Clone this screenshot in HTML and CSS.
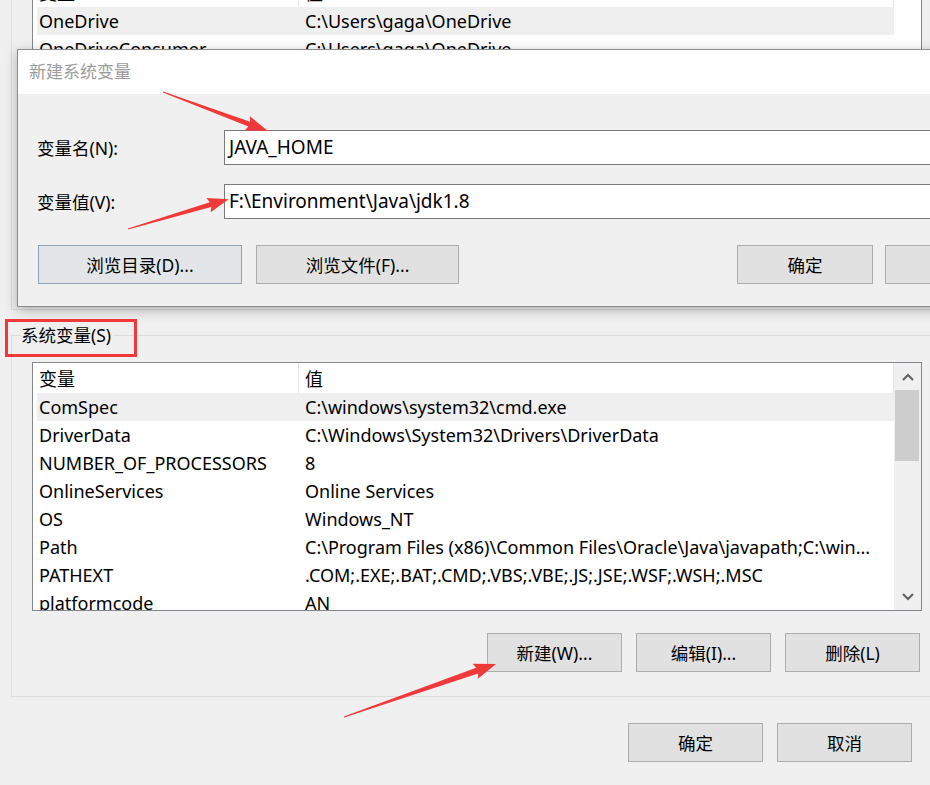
FILE: index.html
```html
<!DOCTYPE html>
<html lang="zh-CN">
<head>
<meta charset="utf-8">
<title>环境变量</title>
<link rel="stylesheet" href="styles.css">
</head>
<body>
<div class="window">
  <div class="group-user">
    <div class="listbox listbox-user">
      <div class="list-main">
        <div class="list-header">
          <div class="hcell hcell-name">变量</div>
          <div class="hcell">值</div>
        </div>
        <div class="row row-sel"><div class="cell-name">OneDrive</div><div class="cell-val">C:\Users\gaga\OneDrive</div></div>
        <div class="row"><div class="cell-name">OneDriveConsumer</div><div class="cell-val">C:\Users\gaga\OneDrive</div></div>
        <div class="row"><div class="cell-name">Path</div><div class="cell-val">C:\Users\gaga\AppData\Local\Microsoft\WindowsApps</div></div>
        <div class="row"><div class="cell-name">TEMP</div><div class="cell-val">C:\Users\gaga\AppData\Local\Temp</div></div>
      </div>
      <div class="scrollbar scrollbar-white"></div>
    </div>
  </div>

  <fieldset class="group-sys">
    <legend>系统变量(S)</legend>
    <div class="listbox listbox-sys">
      <div class="list-main">
        <div class="list-header">
          <div class="hcell hcell-name">变量</div>
          <div class="hcell">值</div>
        </div>
        <div class="row row-sel"><div class="cell-name">ComSpec</div><div class="cell-val">C:\windows\system32\cmd.exe</div></div>
        <div class="row"><div class="cell-name">DriverData</div><div class="cell-val">C:\Windows\System32\Drivers\DriverData</div></div>
        <div class="row"><div class="cell-name">NUMBER_OF_PROCESSORS</div><div class="cell-val">8</div></div>
        <div class="row"><div class="cell-name">OnlineServices</div><div class="cell-val">Online Services</div></div>
        <div class="row"><div class="cell-name">OS</div><div class="cell-val">Windows_NT</div></div>
        <div class="row"><div class="cell-name">Path</div><div class="cell-val">C:\Program Files (x86)\Common Files\Oracle\Java\javapath;C:\win...</div></div>
        <div class="row"><div class="cell-name">PATHEXT</div><div class="cell-val">.COM;.EXE;.BAT;.CMD;.VBS;.VBE;.JS;.JSE;.WSF;.WSH;.MSC</div></div>
        <div class="row"><div class="cell-name">platformcode</div><div class="cell-val">AN</div></div>
      </div>
      <div class="scrollbar">
        <div class="sb-btn">
          <svg width="12" height="8" viewBox="0 0 12 8"><polyline points="1,7 6,2 11,7" fill="none" stroke="#606060" stroke-width="2"/></svg>
        </div>
        <div class="sb-thumb"></div>
        <div class="sb-track"></div>
        <div class="sb-btn">
          <svg width="12" height="8" viewBox="0 0 12 8"><polyline points="1,1 6,6 11,1" fill="none" stroke="#606060" stroke-width="2"/></svg>
        </div>
      </div>
    </div>
    <div class="list-actions">
      <div class="btn btn-sm">新建(W)...</div>
      <div class="btn btn-sm">编辑(I)...</div>
      <div class="btn btn-sm">删除(L)</div>
    </div>
  </fieldset>

  <div class="footer">
    <div class="btn btn-sm">确定</div>
    <div class="btn btn-sm">取消</div>
  </div>
</div>

<div class="dialog">
  <div class="dlg-title">新建系统变量</div>
  <div class="dlg-body">
    <div class="field">
      <label class="field-label">变量名(N):</label>
      <div class="input">JAVA_HOME</div>
    </div>
    <div class="field">
      <label class="field-label">变量值(V):</label>
      <div class="input">F:\Environment\Java\jdk1.8</div>
    </div>
    <div class="dlg-buttons">
      <div class="btn btn-focus btn-wide1">浏览目录(D)...</div>
      <div class="btn btn-wide2">浏览文件(F)...</div>
      <div class="btn btn-ok">确定</div>
      <div class="btn btn-cancel">取消</div>
    </div>
  </div>
</div>

<svg class="marks" width="930" height="785" viewBox="0 0 930 785">
  <rect x="6.5" y="320.5" width="129" height="35" fill="none" stroke="#f03a3a" stroke-width="3"/>
  <g transform="translate(163 92) rotate(20.4)" fill="#f03a3a">
    <polygon points="0,-0.5 92,-2.5 90,-7.5 112,0 90,7.5 92,2.5 0,0.5"/>
  </g>
  <g transform="translate(128 229) rotate(-16.5)" fill="#f03a3a">
    <polygon points="0,-0.5 86,-2.5 84,-7.5 105,0 84,7.5 86,2.5 0,0.5"/>
  </g>
  <g transform="translate(344 717) rotate(-19.2)" fill="#f03a3a">
    <polygon points="0,-0.6 141,-3 139,-8 161,0 139,8 141,3 0,0.6"/>
  </g>
</svg>
</body>
</html>
```
FILE: styles.css
```css
* { box-sizing: border-box; }
html, body { margin: 0; padding: 0; }
body {
  width: 930px;
  height: 785px;
  overflow: hidden;
  position: relative;
  background: #f0f0f0;
  font-family: "Noto Sans", "Noto Sans CJK SC", sans-serif;
  font-size: 18px;
  color: #000;
}

.window { padding-left: 11px; }

/* upper (user variables) group, mostly hidden under the dialog */
.group-user {
  margin-top: -60px;
  width: 940px;
  height: 370px;
  border: 1px solid #dcdcdc;
  padding: 35px 0 0 20px;
}

.listbox {
  width: 890px;
  border: 1px solid #828790;
  background: #fff;
  display: flex;
  overflow: hidden;
}
.listbox-user { height: 300px; }
.listbox-sys { height: 249px; }

.list-main { flex: 1; overflow: hidden; }
.list-header {
  height: 30px;
  display: grid;
  grid-template-columns: 266px 1fr;
  border-right: 1px solid #e5e5e5;
}
.hcell {
  display: flex;
  align-items: center;
  padding-left: 6px;
  white-space: nowrap;
}
.hcell-name { border-right: 1px solid #e5e5e5; }

.row {
  margin-left: 4px;
  height: 28px;
  display: grid;
  grid-template-columns: 266px 1fr;
  align-items: center;
  white-space: nowrap;
}
.row-sel { background: #efefef; }
.cell-name, .cell-val { padding-left: 2px; overflow: hidden; }

.scrollbar {
  width: 27px;
  flex: none;
  background: #f0f0f0;
  display: flex;
  flex-direction: column;
}
.scrollbar-white { background: #fff; }
.sb-btn {
  height: 27px;
  flex: none;
  display: flex;
  align-items: center;
  justify-content: center;
}
.sb-btn svg { display: block; }
.sb-thumb {
  height: 71px;
  flex: none;
  margin: 0 2px 0 1px;
  background: #cdcdcd;
}
.sb-track { flex: 1; }

/* lower (system variables) group */
.group-sys {
  margin: 13px 0 0;
  padding: 15px 0 24px 20px;
  width: 940px;
  min-width: 0;
  border: 1px solid #dcdcdc;
}
.group-sys legend {
  margin-left: -11px;
  padding: 0 2px 0 0;
  line-height: 24px;
  font-size: 17.5px;
}

.list-actions {
  width: 888px;
  margin-top: 22px;
  display: flex;
  justify-content: flex-end;
  gap: 14px;
}

.btn {
  flex: none;
  height: 39px;
  border: 1px solid #adadad;
  background: #e1e1e1;
  display: flex;
  align-items: center;
  justify-content: center;
  white-space: nowrap;
  font-size: 17.5px;
}
.btn-sm { width: 135px; }

.footer {
  margin-top: 26px;
  padding-right: 18px;
  display: flex;
  justify-content: flex-end;
  gap: 14px;
}

/* overlay dialog window */
.dialog {
  position: absolute;
  left: 17px;
  top: 49px;
  width: 1000px;
  height: 258px;
  border: 1px solid #8c8c8c;
  background: #f0f0f0;
  box-shadow: 0 3px 12px rgba(0, 0, 0, 0.28);
}
.dlg-title {
  height: 44px;
  background: #fff;
  padding: 0 0 3px 11px;
  display: flex;
  align-items: center;
  color: #9b9b9b;
  font-size: 17px;
}
.dlg-body { padding: 36px 0 0 19px; }
.field {
  display: flex;
  align-items: center;
  height: 35px;
}
.field + .field { margin-top: 19px; }
.field-label { width: 187px; flex: none; font-size: 17.5px; }
.input {
  flex: 1;
  height: 35px;
  border: 1px solid #7a7a7a;
  background: #fff;
  padding: 0 0 2px 4px;
  display: flex;
  align-items: center;
  font-size: 19px;
  white-space: nowrap;
}
.dlg-buttons {
  display: flex;
  margin-top: 26px;
  padding-left: 1px;
}
.btn-focus { border-color: #8fa3b7; background: #e3e5e8; }
.btn-wide1 { width: 204px; }
.btn-wide2 { width: 203px; margin-left: 14px; }
.btn-ok { width: 136px; margin-left: 278px; }
.btn-cancel { width: 136px; margin-left: 12px; }

.marks {
  position: absolute;
  left: 0;
  top: 0;
  pointer-events: none;
}
```
